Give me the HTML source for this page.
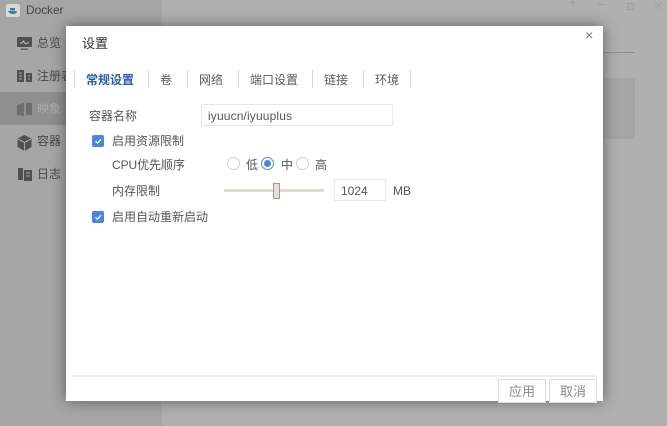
<!DOCTYPE html>
<html lang="zh"><head><meta charset="utf-8"><style>
html,body{margin:0;padding:0;width:667px;height:426px;overflow:hidden}
body{position:relative;background:#b0b0b0;font-family:"Liberation Sans","Noto Sans CJK SC",sans-serif;font-size:12px;color:#555}
.a{position:absolute;white-space:nowrap;line-height:16px}
.side{position:absolute;left:0;top:0;width:162px;height:426px;background:#a6a6a6}
.nav{color:#484848}
.dlg{position:absolute;left:66px;top:26px;width:537px;height:375px;background:#fff;box-shadow:0 0 14px rgba(0,0,0,.45)}
.sep{position:absolute;top:70px;width:1px;height:18px;background:#d4d4d4}
.tab{position:absolute;top:72px;line-height:16px;white-space:nowrap;color:#5a5a5a}
.cb{position:absolute;left:92px;width:12px;height:12px;border-radius:2px;background:#4a86e0}
.r{position:absolute;top:157px;width:11px;height:11px;border:1px solid #d0d0d0;border-radius:50%;background:#fff}
.btn{position:absolute;top:379px;width:46px;height:22px;border:1px solid #dcdcdc;background:#fff;color:#888;text-align:center;line-height:24px;font-size:13px}
</style></head><body>
<div class="side"></div>
<div class="a" style="left:0;top:92px;width:162px;height:33px;background:#8f8f8f"></div>
<svg class="a" style="left:6px;top:4px" width="15" height="14"><rect width="14" height="13" rx="2" fill="#d8d8d8"/><path d="M2 7h9c0 2-2 3-4 3S3 9 2 7z" fill="#3c7f9e"/><rect x="4" y="4" width="5" height="2.500" fill="#3c7f9e"/></svg>
<div class="a" style="left:26px;top:2px;color:#444;letter-spacing:-.1px">Docker</div>
<svg class="a" style="left:17px;top:37px" width="15" height="14"><rect y="0" width="15" height="10" rx="1" fill="#505050"/><rect x="4" y="11.500" width="7" height="1.500" fill="#606060"/><path d="M3 6h2l1.500-2 2 3 1-1h2.500" stroke="#bbb" fill="none"/></svg>
<div class="a nav" style="left:37px;top:35px">总览</div>
<svg class="a" style="left:17px;top:70px" width="15" height="13"><path d="M0 0h7v12H0zM9 3h6v9H9z" fill="#505050"/><path d="M2 3h3M2 6h3M2 9h3M11 6h2M11 9h2" stroke="#a6a6a6"/></svg>
<div class="a nav" style="left:37px;top:68px">注册表</div>
<svg class="a" style="left:17px;top:103px" width="15" height="13"><path d="M0 2l7-2v13l-7-1zM9 0h6v12H9z" fill="#6e6e6e"/></svg>
<div class="a" style="left:37px;top:101px;color:#aaa">映象</div>
<svg class="a" style="left:17px;top:135px" width="15" height="16"><path d="M7.500 0L14.500 3.500V12L7.500 16 .5 12V3.500z" fill="#505050"/><path d="M1 4l6.500 3.500L14 4M7.500 7.500V16" stroke="#a6a6a6" fill="none"/></svg>
<div class="a nav" style="left:37px;top:133px">容器</div>
<svg class="a" style="left:18px;top:168px" width="15" height="14"><path d="M0 0h5v12H0z" fill="#505050"/><path d="M6 2h8v11H6z" fill="#505050"/><path d="M8 5h4M8 8h4" stroke="#a6a6a6"/></svg>
<div class="a nav" style="left:37px;top:166px">日志</div>

<div class="a" style="left:570px;top:0;color:#909090;font-size:8px;line-height:10px">?</div>
<div class="a" style="left:598px;top:4px;width:6px;height:1px;background:#a0a0a0"></div>
<div class="a" style="left:627px;top:3px;width:5px;height:5px;border:1px solid #a0a0a0"></div>
<svg class="a" style="left:654px;top:1px" width="9" height="9"><path d="M1 1l7 7M8 1L1 8" stroke="#a0a0a0"/></svg>
<div class="a" style="left:603px;top:52px;width:32px;height:1px;background:#8e8e8e"></div>
<div class="a" style="left:603px;top:78px;width:32px;height:61px;background:#a6a6a6"></div>

<div class="dlg"></div>
<svg class="a" style="left:586px;top:32px" width="7" height="7"><path d="M.5.5l5.500 5.500M6 .5L.5 6" stroke="#777"/></svg>
<div class="a" style="left:82px;top:35px;font-size:13px;line-height:18px;color:#333">设置</div>

<div class="sep" style="left:74px"></div>
<div class="tab" style="left:86px;color:#2a5fa8;font-weight:bold">常规设置</div>
<div class="sep" style="left:148px"></div>
<div class="tab" style="left:160px">卷</div>
<div class="sep" style="left:187px"></div>
<div class="tab" style="left:199px">网络</div>
<div class="sep" style="left:238px"></div>
<div class="tab" style="left:250px">端口设置</div>
<div class="sep" style="left:312px"></div>
<div class="tab" style="left:324px">链接</div>
<div class="sep" style="left:363px"></div>
<div class="tab" style="left:375px">环境</div>
<div class="sep" style="left:410px"></div>

<div class="a" style="left:89px;top:108px">容器名称</div>
<div class="a" style="left:201px;top:104px;width:190px;height:20px;border:1px solid #e6e6e6;background:#fff"></div>
<div class="a" style="left:208px;top:108px;letter-spacing:.14px">iyuucn/iyuuplus</div>

<div class="cb" style="top:135px"></div>
<svg class="a" style="left:92px;top:135px" width="12" height="12"><path d="M3.500 6.200l2 2 3.500-4" stroke="#fff" stroke-width="1.200" fill="none"/></svg>
<div class="a" style="left:112px;top:133px">启用资源限制</div>

<div class="a" style="left:112px;top:157px;letter-spacing:-.08px">CPU优先顺序</div>
<div class="r" style="left:227px"></div>
<div class="a" style="left:246px;top:157px">低</div>
<div class="r" style="left:261px;border-color:#4a86e0"></div>
<div class="a" style="left:264px;top:160px;width:7px;height:7px;border-radius:50%;background:#4a86e0"></div>
<div class="a" style="left:281px;top:157px">中</div>
<div class="r" style="left:296px"></div>
<div class="a" style="left:315px;top:157px">高</div>

<div class="a" style="left:112px;top:183px">内存限制</div>
<div class="a" style="left:224px;top:189px;width:100px;height:3px;background:#e0dcd4"></div>
<div class="a" style="left:273px;top:183px;width:5px;height:14px;border:1px solid #a09a8e;background:#e4e0d8"></div>
<div class="a" style="left:334px;top:179px;width:50px;height:20px;border:1px solid #e6e6e6;background:#fff"></div>
<div class="a" style="left:341px;top:183px">1024</div>
<div class="a" style="left:393px;top:183px">MB</div>

<div class="cb" style="top:211px"></div>
<svg class="a" style="left:92px;top:211px" width="12" height="12"><path d="M3.500 6.200l2 2 3.500-4" stroke="#fff" stroke-width="1.200" fill="none"/></svg>
<div class="a" style="left:112px;top:209px">启用自动重新启动</div>

<div class="a" style="left:72px;top:375px;width:525px;height:2px;background:#eeeeee"></div>
<div class="btn" style="left:498px">应用</div>
<div class="btn" style="left:549px">取消</div>
</body></html>
